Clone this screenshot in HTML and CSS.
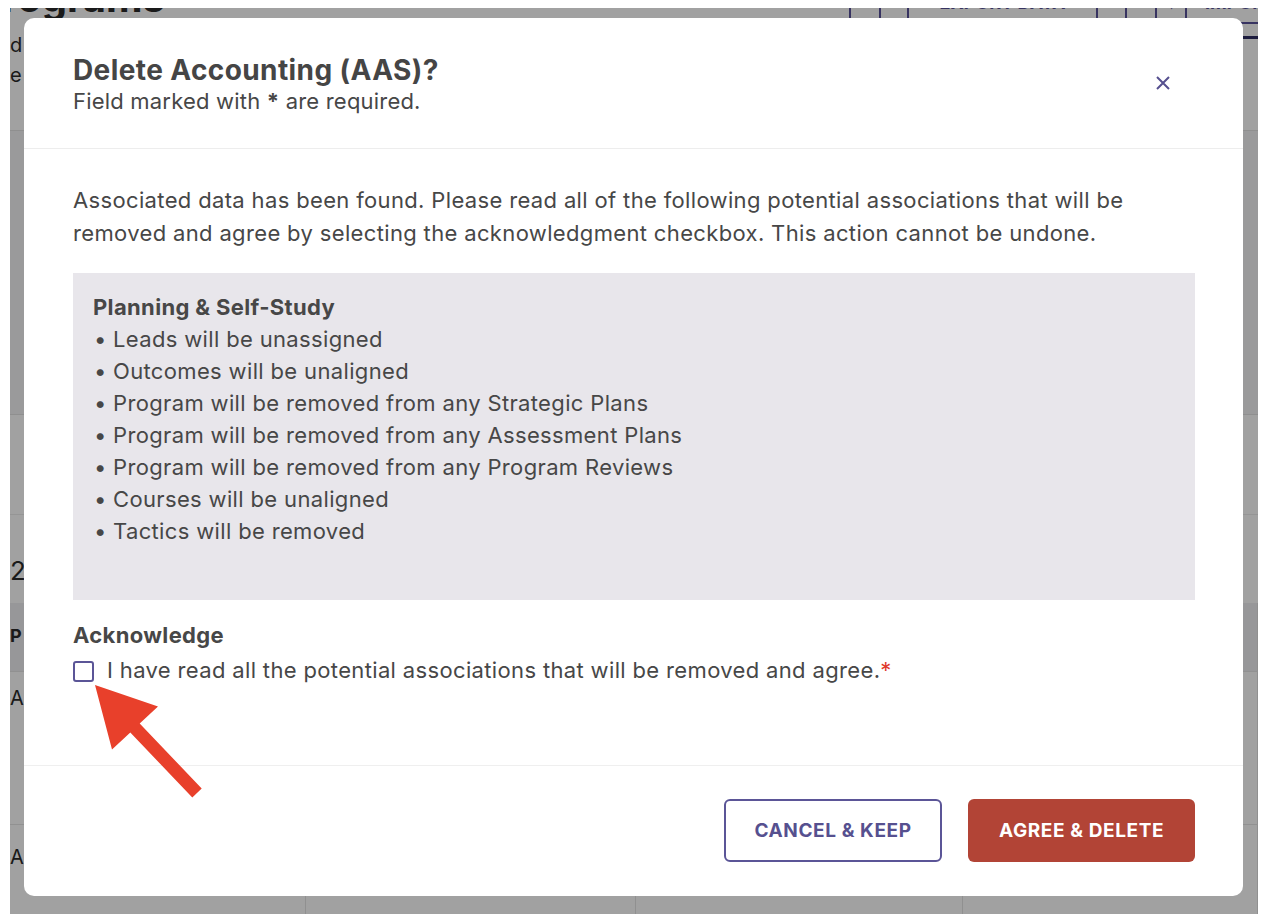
FILE: index.html
```html
<!DOCTYPE html>
<html>
<head lang="en">
    <meta charset="utf-8">
    <title>Delete Accounting (AAS)?</title>
    <link rel="stylesheet" href="styles.css">
</head>
<body>

<div class="screen">

    <div class="page">
        <div class="topbar">
            <h1 class="page-title">Programs</h1>
            <div class="toolbar">
                <span class="tb-btn tb-sm"></span>
                <span class="tb-btn tb-xs"></span>
                <span class="tb-btn tb-wide">EXPORT DATA</span>
                <span class="tb-gap"></span>
                <span class="tb-btn tb-sm"></span>
                <span class="tb-btn tb-sm">&#9662;</span>
                <span class="tb-btn tb-wide tb-last">IMPORT</span>
            </div>
        </div>
        <div class="tabs"><span class="tab-line"></span></div>
        <p class="page-desc">d your programs and keep them up to date.<br>e the programs below.</p>

        <div class="filters"></div>
        <div class="search-row"></div>
        <div class="count-row">2 Programs</div>

        <div class="table">
            <div class="trow thead">
                <span class="cell">P rogram</span>
                <span class="cell">Degree</span>
                <span class="cell">Department</span>
                <span class="cell">Type</span>
            </div>
            <div class="trow">
                <span class="cell">A ccounting (AAS)</span>
                <span class="cell"></span>
                <span class="cell"></span>
                <span class="cell"></span>
            </div>
            <div class="trow">
                <span class="cell">A ccounting (BS)</span>
                <span class="cell"></span>
                <span class="cell"></span>
                <span class="cell cell-low">Curriculum &amp; Co</span>
            </div>
        </div>
    </div>

    <div class="backdrop"></div>

    <div class="modal">
        <div class="modal-head">
            <div>
                <h2 class="modal-title">Delete Accounting (AAS)?</h2>
                <p class="modal-sub">Field marked with <b>*</b> are required.</p>
            </div>
            <button class="close-btn" type="button">
                <svg width="16" height="16" viewBox="0 0 16 16">
                    <path d="M2 2 L14 14 M14 2 L2 14" stroke="#56508f" stroke-width="2" fill="none"/>
                </svg>
            </button>
        </div>

        <div class="modal-body">
            <p class="intro">Associated data has been found. Please read all of the following potential associations that will be removed and agree by selecting the acknowledgment checkbox. This action cannot be undone.</p>

            <div class="assoc">
                <div class="assoc-title">Planning &amp; Self-Study</div>
                <ul class="assoc-list">
                    <li>Leads will be unassigned</li>
                    <li>Outcomes will be unaligned</li>
                    <li>Program will be removed from any Strategic Plans</li>
                    <li>Program will be removed from any Assessment Plans</li>
                    <li>Program will be removed from any Program Reviews</li>
                    <li>Courses will be unaligned</li>
                    <li>Tactics will be removed</li>
                </ul>
            </div>

            <div class="ack-title">Acknowledge</div>
            <label class="ack-row">
                <input type="checkbox" class="ack-box">
                <span>I have read all the potential associations that will be removed and agree.<span class="req">*</span></span>
            </label>
        </div>

        <div class="modal-foot">
            <button class="btn btn-cancel" type="button">CANCEL &amp; KEEP</button>
            <button class="btn btn-delete" type="button">AGREE &amp; DELETE</button>
        </div>
    </div>

    <svg class="arrow" width="1254" height="906" viewBox="10 8 1254 906">
        <polygon fill="#e8402b" points="95,685 158,706.5 139.7,723.5 201.7,788.5 192.3,797.5 130.3,732.5 112,749.6"/>
    </svg>

</div>

</body>
</html>
```

FILE: styles.css
```css
* { box-sizing: border-box; }

body {
    margin: 0;
    background: #fff;
    font-family: Inter, 'Liberation Sans', sans-serif;
    color: #474747;
}

.screen {
    position: relative;
    overflow: hidden;
    margin: 8px 6px 0 10px;
    height: 906px;
    background: #fff;
}

/* page behind the dialog */

.page { color: #2a2a2a; }

.topbar {
    display: flex;
    justify-content: space-between;
    margin-top: -30px;
    height: 40px;
}

.page-title {
    margin: 0 0 0 -34px;
    font-size: 40px;
    line-height: 40px;
    font-weight: 700;
}

.toolbar {
    display: flex;
    margin-right: -116px;
}

.tb-btn {
    height: 46px;
    border: 2px solid #57529a;
    border-right: none;
    color: #57529a;
    font-size: 18px;
    font-weight: 700;
    line-height: 46px;
    text-align: center;
}

.tb-last {
    padding-left: 18px;
    border-right: 2px solid #57529a;
    text-align: left;
}

.tb-sm { width: 30px; }
.tb-xs { width: 28px; }
.tb-wide { width: 189px; }
.tb-gap { width: 29px; border-left: 2px solid #57529a; }

.tabs {
    display: flex;
    justify-content: flex-end;
    height: 3px;
    margin-top: 18px;
}

.tab-line {
    width: 220px;
    background: #2f2d63;
}

.page-desc {
    margin: -9px 0 0;
    font-size: 20px;
    line-height: 30px;
}

.filters {
    height: 285px;
    margin-top: 40px;
    background: #f4f4f6;
    border-top: 1px solid #e2e2e2;
    border-bottom: 1px solid #e2e2e2;
}

.search-row {
    height: 100px;
    border-bottom: 1px solid #ececec;
}

.count-row {
    height: 88px;
    padding-top: 40px;
    font-size: 26px;
}

.trow {
    display: grid;
    grid-template-columns: 296px 330px 327px 1fr;
    border-bottom: 1px solid #e6e6e6;
    font-size: 20px;
}

.thead {
    height: 69px;
    background: #f0f0f2;
    font-weight: 700;
    font-size: 18px;
}

.trow .cell {
    padding: 22px 0 0 0;
    border-right: 1px solid #e4e4e4;
}

.trow:nth-child(2) { height: 153px; }
.trow:nth-child(2) .cell { padding-top: 14px; }
.trow:nth-child(3) { height: 120px; }
.trow:nth-child(3) .cell { padding-top: 20px; }
.trow .cell-low { padding: 80px 0 0 22px; }

.backdrop {
    position: absolute;
    top: 0;
    left: 0;
    right: 0;
    bottom: 0;
    background: rgba(0, 0, 0, 0.37);
}

/* dialog */

.modal {
    position: absolute;
    left: 14px;
    top: 10px;
    width: 1219px;
    height: 878px;
    display: flex;
    flex-direction: column;
    background: #fff;
    border-radius: 10px;
}

.modal-head {
    display: flex;
    justify-content: space-between;
    height: 131px;
    padding: 35px 48px 0 49px;
    border-bottom: 1px solid #ededed;
}

.modal-title {
    margin: 0;
    font-size: 28px;
    line-height: 34px;
    font-weight: 700;
    letter-spacing: 0.4px;
    color: #454545;
}

.modal-sub {
    margin: 0;
    font-size: 22px;
    line-height: 28px;
    letter-spacing: 0.2px;
}

.close-btn {
    width: 30px;
    height: 30px;
    margin: 15px 17px 0 0;
    padding: 7px;
    border: none;
    background: none;
}

.close-btn svg { display: block; }

.modal-body {
    flex: 1;
    padding: 35px 48px 0 49px;
    font-size: 22px;
    letter-spacing: 0.35px;
    border-bottom: 1px solid #efefef;
}

.intro {
    margin: 0 0 23px;
    line-height: 33px;
}

.assoc {
    height: 327px;
    padding: 18px 20px;
    background: #e8e6eb;
    line-height: 32px;
}

.assoc-title { font-weight: 700; }

.assoc-list {
    margin: 0;
    padding: 0;
    list-style: none;
}

.assoc-list li:before {
    content: "\2022";
    display: inline-block;
    width: 19px;
    padding-left: 1px;
}

.ack-title {
    margin-top: 19px;
    font-weight: 700;
    line-height: 32px;
}

.ack-row {
    display: flex;
    align-items: center;
    gap: 13px;
    margin-top: 4px;
    line-height: 30px;
}

.ack-box {
    appearance: none;
    flex: none;
    width: 21px;
    height: 21px;
    margin: 2px 0 0;
    border: 2px solid #5b5597;
    border-radius: 3px;
    background: #fff;
}

.req { color: #e0392b; }

.modal-foot {
    display: flex;
    justify-content: flex-end;
    gap: 26px;
    height: 130px;
    padding: 33px 48px 0;
}

.btn {
    height: 63px;
    padding: 0;
    border-radius: 6px;
    font-family: Inter, 'Liberation Sans', sans-serif;
    font-size: 19px;
    font-weight: 700;
    letter-spacing: 0.6px;
}

.btn-cancel {
    width: 218px;
    border: 2px solid #5b5597;
    background: #fff;
    color: #56508f;
}

.btn-delete {
    width: 227px;
    border: none;
    background: #b24436;
    color: #fff;
}

.arrow {
    position: absolute;
    top: 0;
    left: 0;
    pointer-events: none;
}
```
